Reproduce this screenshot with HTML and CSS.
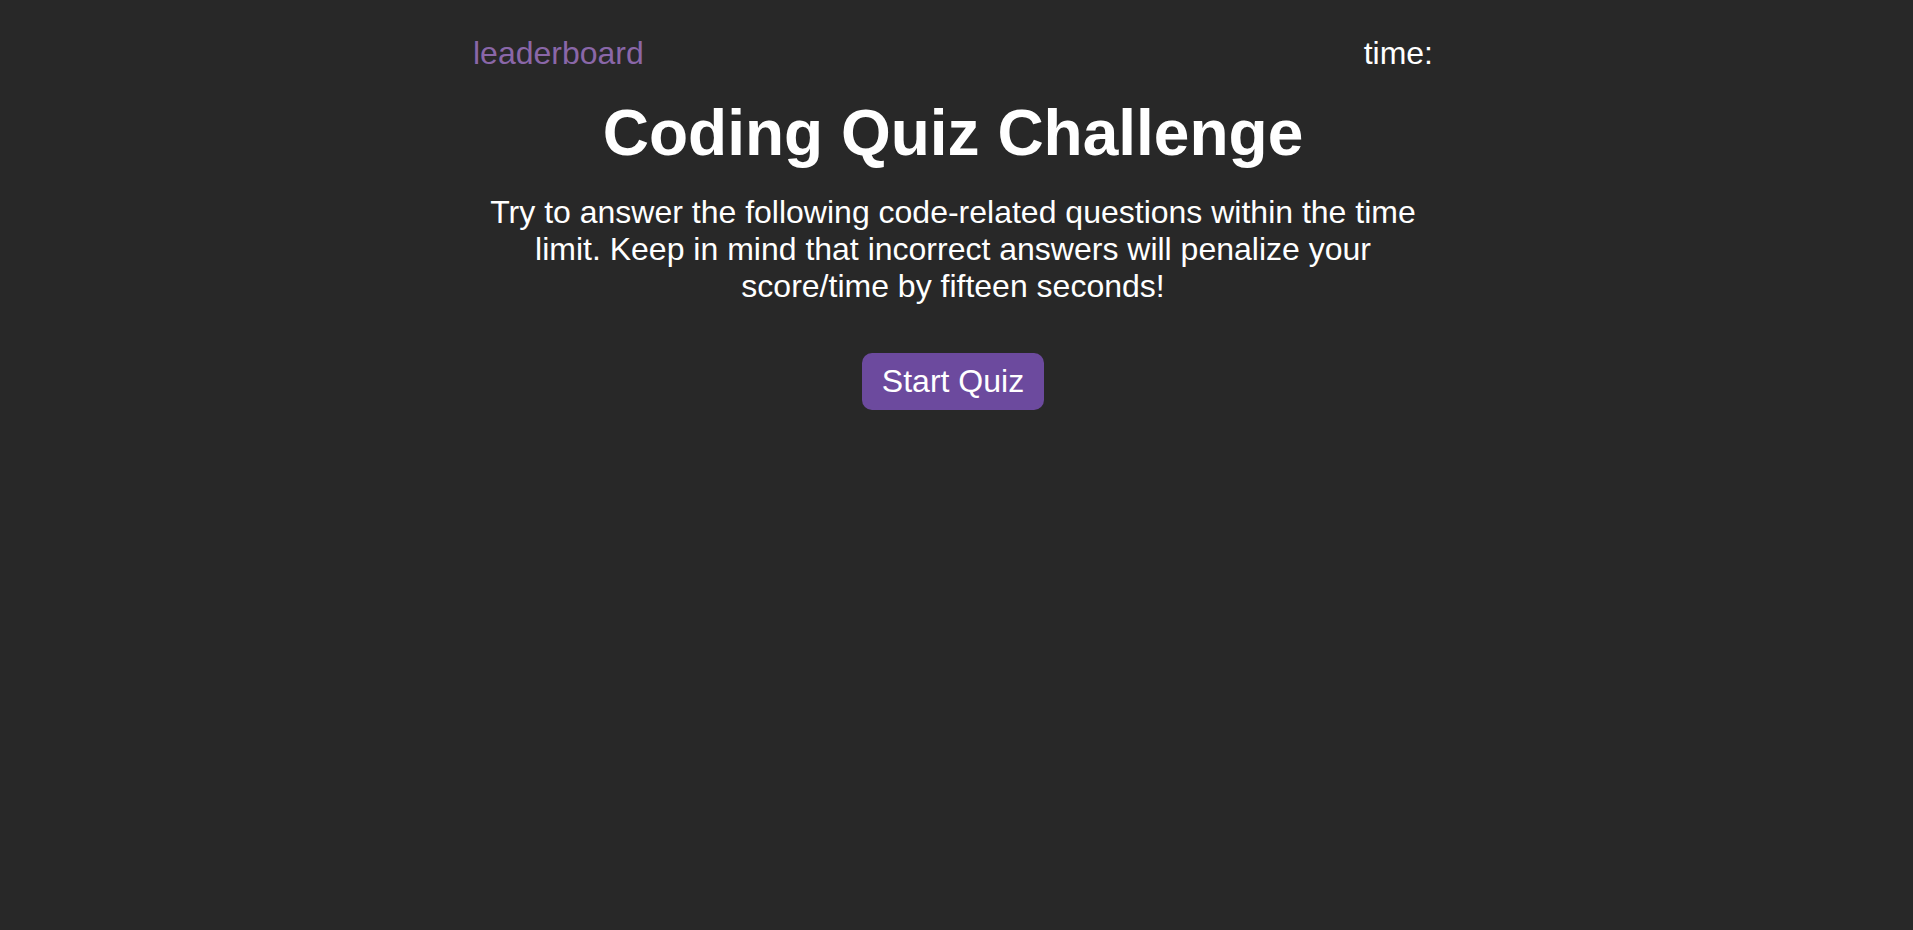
FILE: index.html
```html
<!DOCTYPE html>
<html lang="en">
<head>
<meta charset="utf-8">
<title>Coding Quiz Challenge</title>
<link rel="stylesheet" href="styles.css">
</head>
<body>
<div class="wrapper">
  <header class="top-bar">
    <a class="leaderboard" href="#">leaderboard</a>
    <span class="timer">time:</span>
  </header>
  <main class="intro">
    <h1 class="title">Coding Quiz Challenge</h1>
    <p class="description">Try to answer the following code-related questions within the time limit. Keep in mind that incorrect answers will penalize your score/time by fifteen seconds!</p>
    <button class="start-btn" type="button">Start Quiz</button>
  </main>
</div>
</body>
</html>
```

FILE: styles.css
```css
html, body {
  margin: 0;
  padding: 0;
  background: #282828;
  min-height: 100%;
}

body {
  font-family: "Liberation Sans", Arial, sans-serif;
  color: #ffffff;
  font-size: 32px;
}

.wrapper {
  width: 960px;
  margin: 0 auto;
  padding: 35px 7px 0 0;
}

.top-bar {
  display: flex;
  justify-content: space-between;
  align-items: baseline;
}

.leaderboard {
  color: #8a67a8;
  text-decoration: none;
}

.timer {
  color: #ffffff;
}

.intro {
  display: flex;
  flex-direction: column;
  align-items: center;
  text-align: center;
}

.title {
  margin: 24px 0 0;
  font-size: 64px;
  font-weight: bold;
  line-height: normal;
}

.description {
  margin: 24px 0 0;
  font-size: 32px;
  line-height: normal;
}

.start-btn {
  margin-top: 48px;
  padding: 10px 20px;
  border: none;
  border-radius: 10px;
  background: #6c4a9e;
  color: #ffffff;
  font-family: "Liberation Sans", Arial, sans-serif;
  font-size: 32px;
  line-height: normal;
  cursor: pointer;
}
```
